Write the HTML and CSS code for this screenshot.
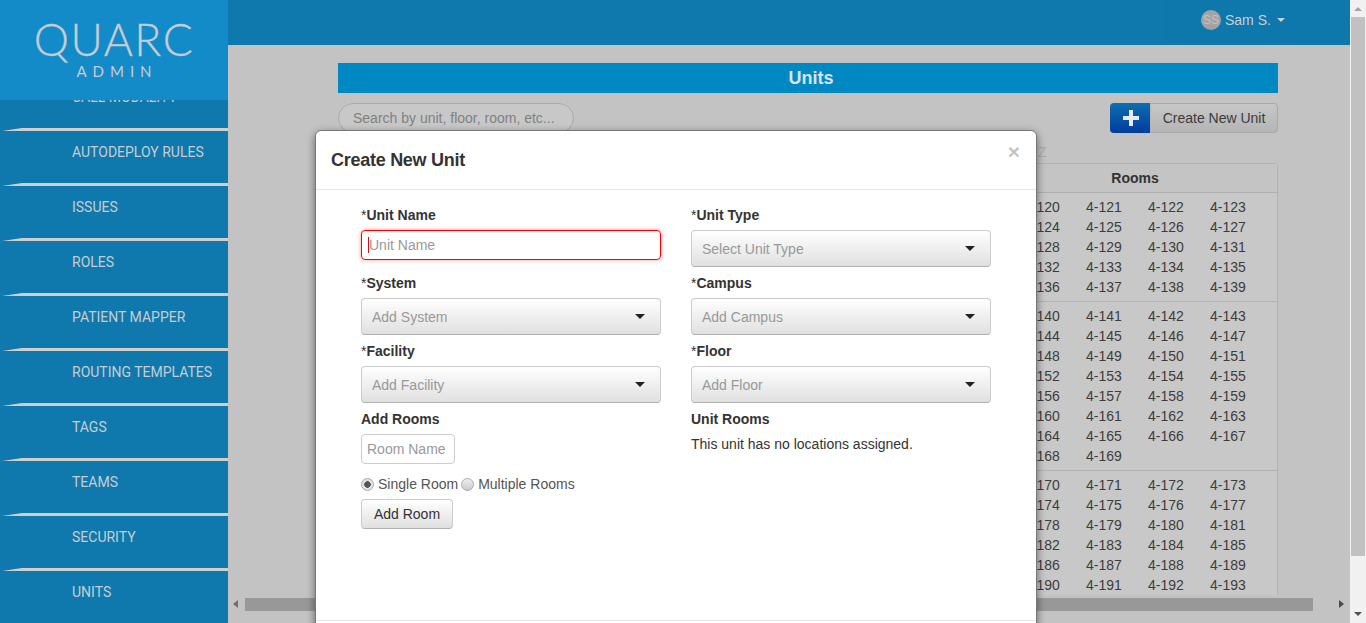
FILE: index.html
```html
<!DOCTYPE html>
<html lang="en">
<head>
    <meta charset="UTF-8">
    <meta name="viewport" content="width=device-width, initial-scale=1.0">
    <title>Units - Quarc Admin</title>
    <link rel="stylesheet" href="styles.css">
</head>
<body>
    <div class="app">
        <aside class="sidebar">
            <div class="logo">
                <div class="logo-name">QUARC</div>
                <div class="logo-sub">ADMIN</div>
            </div>
            <ul class="side-nav">
                <li>CALL MODALITY</li>
                <li>AUTODEPLOY RULES</li>
                <li>ISSUES</li>
                <li>ROLES</li>
                <li>PATIENT MAPPER</li>
                <li>ROUTING TEMPLATES</li>
                <li>TAGS</li>
                <li>TEAMS</li>
                <li>SECURITY</li>
                <li>UNITS</li>
            </ul>
        </aside>

        <div class="main">
            <header class="topbar">
                <div class="user-menu">
                    <span class="avatar">SS</span>
                    <span>Sam S.</span>
                    <span class="user-caret"></span>
                </div>
            </header>

            <div class="content">
                <h1 class="page-title">Units</h1>
                <div class="toolbar">
                    <input class="search" type="text" placeholder="Search by unit, floor, room, etc...">
                    <button class="create-btn" type="button">
                        <span class="create-icon">
                            <svg width="16" height="16" viewBox="0 0 16 16"><path d="M6 0h4v6h6v4h-6v6H6v-6H0V6h6z" fill="#e6ecf5"/></svg>
                        </span>
                        <span class="create-label">Create New Unit</span>
                    </button>
                </div>
                <div class="alpha-filter">Z</div>
                <div class="units-table">
                    <div class="rooms-col">
                        <div class="rooms-head">Rooms</div>
                        <div class="rooms-group">
                            <span>4-120</span><span>4-121</span><span>4-122</span><span>4-123</span>
                            <span>4-124</span><span>4-125</span><span>4-126</span><span>4-127</span>
                            <span>4-128</span><span>4-129</span><span>4-130</span><span>4-131</span>
                            <span>4-132</span><span>4-133</span><span>4-134</span><span>4-135</span>
                            <span>4-136</span><span>4-137</span><span>4-138</span><span>4-139</span>
                        </div>
                        <div class="rooms-group">
                            <span>4-140</span><span>4-141</span><span>4-142</span><span>4-143</span>
                            <span>4-144</span><span>4-145</span><span>4-146</span><span>4-147</span>
                            <span>4-148</span><span>4-149</span><span>4-150</span><span>4-151</span>
                            <span>4-152</span><span>4-153</span><span>4-154</span><span>4-155</span>
                            <span>4-156</span><span>4-157</span><span>4-158</span><span>4-159</span>
                            <span>4-160</span><span>4-161</span><span>4-162</span><span>4-163</span>
                            <span>4-164</span><span>4-165</span><span>4-166</span><span>4-167</span>
                            <span>4-168</span><span>4-169</span>
                        </div>
                        <div class="rooms-group">
                            <span>4-170</span><span>4-171</span><span>4-172</span><span>4-173</span>
                            <span>4-174</span><span>4-175</span><span>4-176</span><span>4-177</span>
                            <span>4-178</span><span>4-179</span><span>4-180</span><span>4-181</span>
                            <span>4-182</span><span>4-183</span><span>4-184</span><span>4-185</span>
                            <span>4-186</span><span>4-187</span><span>4-188</span><span>4-189</span>
                            <span>4-190</span><span>4-191</span><span>4-192</span><span>4-193</span>
                        </div>
                    </div>
                </div>
            </div>

            <div class="h-scroll">
                <span class="arrow-left"></span>
                <span class="h-thumb"></span>
                <span class="arrow-right"></span>
            </div>
        </div>

        <div class="modal">
            <div class="modal-header">
                <h2>Create New Unit</h2>
                <span class="modal-close">&times;</span>
            </div>
            <div class="modal-body">
                <div class="form-col">
                    <div class="field">
                        <label><span class="star">*</span>Unit Name</label>
                        <div class="unit-input"><span class="cursor"></span>Unit Name</div>
                    </div>
                    <div class="field">
                        <label><span class="star">*</span>System</label>
                        <div class="select-box">Add System</div>
                    </div>
                    <div class="field">
                        <label><span class="star">*</span>Facility</label>
                        <div class="select-box">Add Facility</div>
                    </div>
                    <div class="field">
                        <label for="roomName">Add Rooms</label>
                        <input class="room-input" id="roomName" type="text" placeholder="Room Name">
                        <div class="radio-row">
                            <span class="radio radio-on"></span><span>Single Room</span>
                            <span class="radio"></span><span>Multiple Rooms</span>
                        </div>
                        <button class="add-room" type="button">Add Room</button>
                    </div>
                </div>
                <div class="form-col">
                    <div class="field">
                        <label><span class="star">*</span>Unit Type</label>
                        <div class="select-box">Select Unit Type</div>
                    </div>
                    <div class="field">
                        <label><span class="star">*</span>Campus</label>
                        <div class="select-box">Add Campus</div>
                    </div>
                    <div class="field">
                        <label><span class="star">*</span>Floor</label>
                        <div class="select-box">Add Floor</div>
                    </div>
                    <div class="field">
                        <label>Unit Rooms</label>
                        <p class="no-rooms">This unit has no locations assigned.</p>
                    </div>
                </div>
            </div>
            <div class="modal-footer"></div>
        </div>

        <div class="v-scroll">
            <span class="arrow-up"></span>
            <span class="v-thumb"></span>
            <span class="arrow-down"></span>
        </div>
    </div>
</body>
</html>
```

FILE: styles.css
```css
/* General Styling */
html, body {
    height: 100%;
    margin: 0;
    overflow: hidden;
}

body {
    font-family: "Liberation Sans", Arial, sans-serif;
    font-size: 14px;
    color: #333;
}

* {
    box-sizing: border-box;
}

.app {
    position: relative;
    display: flex;
    height: 623px;
    overflow: hidden;
    background: #c3c3c3;
}

/* Sidebar */
.sidebar {
    position: relative;
    width: 228px;
    flex: none;
    background: #0f79ad;
    overflow: hidden;
}

.logo {
    position: absolute;
    top: 0;
    left: 0;
    width: 100%;
    height: 100px;
    background: #128bc8;
    color: #c6cdd2;
    text-align: center;
    z-index: 1;
}

.logo-name {
    font-family: Lato, sans-serif;
    font-weight: 300;
    font-size: 44.5px;
    line-height: 44px;
    letter-spacing: 1.5px;
    padding-top: 17px;
    -webkit-text-stroke: 0.3px #c6cdd2;
}

.logo-sub {
    font-family: Lato, sans-serif;
    font-size: 15px;
    line-height: 16px;
    letter-spacing: 6px;
    padding-left: 6px;
    margin-top: 2px;
}

.side-nav {
    list-style: none;
    margin: 0;
    padding: 70px 0 0;
}

.side-nav li {
    position: relative;
    height: 55px;
    padding-left: 72px;
    font-family: Roboto, sans-serif;
    font-size: 14px;
    line-height: 55px;
    color: #c6cdd2;
}

.side-nav li::after {
    content: "";
    position: absolute;
    left: 2px;
    right: 0;
    bottom: -6px;
    height: 3px;
    background: #cfcfcf;
    clip-path: polygon(0 100%, 20px 0, 100% 0, 100% 100%);
}

.side-nav li:last-child::after {
    display: none;
}

/* Main */
.main {
    flex: 1;
    min-width: 0;
    display: flex;
    flex-direction: column;
}

.topbar {
    height: 45px;
    flex: none;
    background: #0f79ad;
    display: flex;
    justify-content: flex-end;
}

.user-menu {
    width: 184px;
    height: 41px;
    padding: 0 0 1px 35px;
    background: #0e77ab;
    box-shadow: 0 0 3px rgba(0, 0, 0, 0.06);
    display: flex;
    align-items: center;
    gap: 4px;
    color: #c6d0d6;
}

.avatar {
    width: 20px;
    height: 20px;
    border-radius: 50%;
    background: #a3a3a3;
    color: #c2c2c2;
    font-size: 12px;
    line-height: 20px;
    text-align: center;
}

.user-caret {
    margin-left: 2px;
    border-top: 4px solid #c6d0d6;
    border-left: 4px solid transparent;
    border-right: 4px solid transparent;
}

.content {
    flex: 1;
    min-height: 0;
    padding: 18px 72px 0 110px;
    overflow: hidden;
}

.page-title {
    margin: 0;
    height: 30px;
    padding-left: 6px;
    background: #0088c2;
    color: #d6e4ec;
    font-size: 18px;
    line-height: 30px;
    text-align: center;
}

.toolbar {
    display: flex;
    justify-content: space-between;
    margin-top: 10px;
}

.search {
    width: 236px;
    height: 30px;
    padding: 0 14px;
    border: 1px solid #aaa;
    border-radius: 15px;
    background: #c8c8c8;
    font: inherit;
}

.search::placeholder {
    color: #808080;
    opacity: 1;
}

.create-btn {
    display: flex;
    width: 168px;
    height: 30px;
    padding: 0;
    border: 0;
    border-radius: 4px;
    background: linear-gradient(to bottom, #c8c8c8, #b4b4b4);
    font: inherit;
    color: #3c3c3c;
    overflow: hidden;
}

.create-icon {
    width: 40px;
    height: 100%;
    flex: none;
    padding-left: 1px;
    display: flex;
    align-items: center;
    justify-content: center;
    background: linear-gradient(to bottom, #0f6eaf, #003c9e);
}

.create-label {
    flex: 1;
    height: 100%;
    border: 1px solid #a8a8a8;
    border-left-color: #b4b4b4;
    border-radius: 0 4px 4px 0;
    line-height: 28px;
    text-align: center;
}

.alpha-filter {
    height: 30px;
    padding-left: 700px;
    color: #adadad;
    font-size: 14px;
    line-height: 38px;
}

.units-table {
    display: flex;
    justify-content: flex-end;
}

.rooms-col {
    width: 286px;
    border: 1px solid #b2b2b2;
    border-bottom: 0;
    border-radius: 4px 4px 0 0;
    background: #c8c8c8;
}

.rooms-head {
    height: 29px;
    background: #c4c4c4;
    border-bottom: 1px solid #afafaf;
    font-weight: bold;
    line-height: 28px;
    text-align: center;
    color: #333;
}

.rooms-group {
    display: grid;
    grid-template-columns: repeat(4, 62px);
    grid-auto-rows: 20px;
    padding: 4px 0 4px 31px;
    border-bottom: 1px solid #b2b2b2;
    line-height: 20px;
    color: #3d3d3d;
}

/* Horizontal scrollbar */
.h-scroll {
    height: 28px;
    flex: none;
    display: flex;
    align-items: flex-start;
    padding-top: 3px;
    position: relative;
}

.h-thumb {
    margin-left: 17px;
    width: 1068px;
    height: 13px;
    background: #989898;
}

.arrow-left,
.arrow-right {
    position: absolute;
    top: 5px;
    border-top: 4px solid transparent;
    border-bottom: 4px solid transparent;
}

.arrow-left {
    left: 5px;
    border-right: 5px solid #6f6f6f;
}

.arrow-right {
    right: 6px;
    border-left: 5px solid #4a4a4a;
}

/* Vertical scrollbar */
.v-scroll {
    position: relative;
    width: 16px;
    flex: none;
    background: #f1f1f1;
    z-index: 3;
}

.v-thumb {
    position: absolute;
    top: 17px;
    left: 1px;
    width: 14px;
    height: 539px;
    background: #c1c1c1;
}

.arrow-up,
.arrow-down {
    position: absolute;
    left: 4px;
    border-left: 4px solid transparent;
    border-right: 4px solid transparent;
}

.arrow-up {
    top: 7px;
    border-bottom: 4px solid #a3a3a3;
}

.arrow-down {
    bottom: 7px;
    border-top: 4px solid #505050;
}

/* Modal */
.modal {
    position: absolute;
    top: 130px;
    left: 315px;
    width: 722px;
    background: #fff;
    border: 1px solid #777;
    border-radius: 6px;
    box-shadow: 0 3px 9px rgba(0, 0, 0, 0.5);
    z-index: 2;
}

.modal-header {
    position: relative;
    height: 59px;
    padding: 16px 15px;
    border-bottom: 1px solid #e5e5e5;
}

.modal-header h2 {
    margin: 0;
    font-size: 18px;
    letter-spacing: -0.27px;
    line-height: 26px;
    color: #333;
}

.modal-close {
    position: absolute;
    top: 10px;
    right: 16px;
    font-size: 21px;
    font-weight: bold;
    line-height: 21px;
    color: #c4c4c4;
}

.modal-body {
    height: 430px;
    display: grid;
    grid-template-columns: 300px 300px;
    column-gap: 30px;
    padding: 15px 0 0 45px;
}

.form-col {
    display: flex;
    flex-direction: column;
}

.field {
    height: 68px;
}

.field label {
    display: block;
    height: 20px;
    font-weight: bold;
    line-height: 20px;
    color: #333;
    margin-bottom: 5px;
}

.star {
    font-weight: normal;
}

.unit-input {
    height: 30px;
    margin-top: 1px;
    padding-left: 7px;
    border: 1px solid #f00;
    border-radius: 4px;
    box-shadow: 0 0 4px rgba(255, 0, 0, 0.4);
    color: #999;
    line-height: 28px;
    position: relative;
}

.cursor {
    position: absolute;
    left: 6px;
    top: 6px;
    width: 1px;
    height: 16px;
    background: #d01010;
}

.select-box {
    position: relative;
    height: 37px;
    padding-left: 10px;
    border: 1px solid #ccc;
    border-bottom-color: #b0b0b0;
    border-radius: 4px;
    background: linear-gradient(to bottom, #fff, #e0e0e0);
    color: #999;
    line-height: 36px;
}

.select-box::after {
    content: "";
    position: absolute;
    top: 15px;
    right: 15px;
    border-top: 5px solid #222;
    border-left: 5px solid transparent;
    border-right: 5px solid transparent;
}

.room-input {
    display: block;
    width: 94px;
    height: 30px;
    padding: 0 5px;
    border: 1px solid #ccc;
    border-radius: 4px;
    font: inherit;
}

.room-input::placeholder {
    color: #999;
    opacity: 1;
}

.radio-row {
    display: flex;
    align-items: center;
    margin-top: 10px;
    height: 20px;
    color: #555;
}

.radio {
    width: 13px;
    height: 13px;
    margin-right: 4px;
    border: 1px solid #aaa;
    border-radius: 50%;
    background: linear-gradient(to bottom, #eee, #ccc);
}

.radio-row span:nth-child(3) {
    margin-left: 3px;
}

.radio-on {
    background: radial-gradient(circle, #555 0, #555 3px, #e2e2e2 3.5px);
}

.add-room {
    display: block;
    width: 92px;
    height: 30px;
    margin-top: 5px;
    border: 1px solid #ccc;
    border-bottom-color: #b0b0b0;
    border-radius: 4px;
    background: linear-gradient(to bottom, #fff, #e0e0e0);
    font: inherit;
    color: #333;
}

.no-rooms {
    margin: 0;
    padding-top: 2px;
    color: #333;
}

.modal-footer {
    height: 60px;
    border-top: 1px solid #e5e5e5;
}
```
